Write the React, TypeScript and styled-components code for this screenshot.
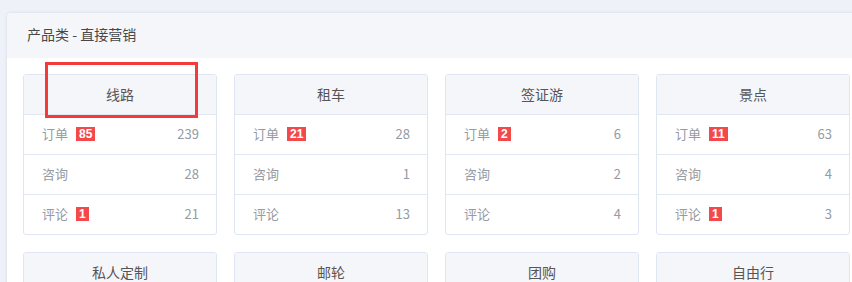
import React from "react";
import styled, { createGlobalStyle } from "styled-components";

// --- DATA ---
type Row = { label: string; badge?: number; value: number };
type Product = { name: string; rows: Row[] };

const products: Product[] = [
  {
    name: "线路",
    rows: [
      { label: "订单", badge: 85, value: 239 },
      { label: "咨询", value: 28 },
      { label: "评论", badge: 1, value: 21 },
    ],
  },
  {
    name: "租车",
    rows: [
      { label: "订单", badge: 21, value: 28 },
      { label: "咨询", value: 1 },
      { label: "评论", value: 13 },
    ],
  },
  {
    name: "签证游",
    rows: [
      { label: "订单", badge: 2, value: 6 },
      { label: "咨询", value: 2 },
      { label: "评论", value: 4 },
    ],
  },
  {
    name: "景点",
    rows: [
      { label: "订单", badge: 11, value: 63 },
      { label: "咨询", value: 4 },
      { label: "评论", badge: 1, value: 3 },
    ],
  },
  { name: "私人定制", rows: [] },
  { name: "邮轮", rows: [] },
  { name: "团购", rows: [] },
  { name: "自由行", rows: [] },
];

// --- STYLES ---
const GlobalStyle = createGlobalStyle`
  html, body {
    margin: 0;
    padding: 0;
    background: #eef1f8;
    overflow: hidden;
  }
  body {
    font-family: "Noto Sans CJK SC", "Liberation Sans", sans-serif;
  }
  * {
    box-sizing: border-box;
  }
`;

const Page = styled.div`
  padding: 13px 0 0 7px;
  width: 900px;
`;

const Panel = styled.div`
  position: relative;
  width: 876px;
  background: #ffffff;
  border-radius: 4px;
  box-shadow: 0 0 3px rgba(170, 180, 210, 0.45);
  overflow: hidden;
`;

const PanelHeader = styled.div`
  height: 45px;
  display: flex;
  align-items: center;
  padding: 0 0 3px 20px;
  background: #f4f6fa;
  font-size: 14px;
  color: #484848;
`;

const CardGrid = styled.div`
  display: grid;
  grid-template-columns: repeat(4, 194px);
  column-gap: 17px;
  row-gap: 17px;
  padding: 16px 0 0 16px;
`;

const Card = styled.div`
  border: 1px solid #dfe6f2;
  border-radius: 3px;
  overflow: hidden;
  background: #fff;
`;

const CardTitle = styled.div`
  height: 39px;
  display: flex;
  align-items: center;
  justify-content: center;
  padding-bottom: 2px;
  background: #f5f6fa;
  font-size: 14px;
  color: #555;
`;

const StatRow = styled.div`
  height: 40px;
  display: flex;
  align-items: center;
  padding: 0 17px 2px 18px;
  border-top: 1px solid #e2e8f2;
  font-size: 13px;
  color: #959aa3;

  &:first-of-type {
    border-top-color: #f9fafc;
  }
`;

const Label = styled.span`
  margin-right: 8px;
`;

const Badge = styled.span`
  display: inline-flex;
  align-items: center;
  justify-content: center;
  height: 14px;
  min-width: 12px;
  padding: 0 3px;
  background: #f4494b;
  color: #fff;
  font-family: "Liberation Sans", sans-serif;
  font-weight: 700;
  font-size: 12px;
  line-height: 14px;
`;

const Value = styled.span`
  margin-left: auto;
`;

const Highlight = styled.div`
  position: absolute;
  left: 38px;
  top: 49px;
  width: 153px;
  height: 56px;
  border: 3px solid #f53a3a;
  pointer-events: none;
`;

const App: React.FC = () => {
  return (
    <Page>
      <GlobalStyle />
      <Panel>
        <PanelHeader>产品类 - 直接营销</PanelHeader>
        <CardGrid>
          {products.map((p) => (
            <Card key={p.name}>
              <CardTitle>{p.name}</CardTitle>
              {p.rows.map((r) => (
                <StatRow key={r.label}>
                  <Label>{r.label}</Label>
                  {r.badge !== undefined && <Badge>{r.badge}</Badge>}
                  <Value>{r.value}</Value>
                </StatRow>
              ))}
            </Card>
          ))}
        </CardGrid>
        <Highlight />
      </Panel>
    </Page>
  );
};

export default App;
